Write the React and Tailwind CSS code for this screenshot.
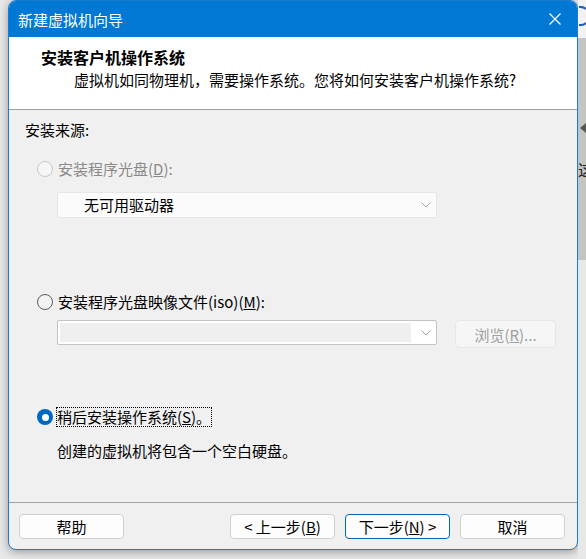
import React, { useState } from 'react';

// 单选按钮
function Radio({ checked, disabled }) {
  if (checked) {
    return (
      <span className="w-[16px] h-[16px] rounded-full bg-[#0067c0] flex items-center justify-center shrink-0">
        <span className="w-[7px] h-[7px] rounded-full bg-white" />
      </span>
    );
  }
  return (
    <span
      className={
        disabled
          ? 'w-[16px] h-[16px] rounded-full border border-[#c6c6c6] bg-[#f6f6f6] shrink-0'
          : 'w-[16px] h-[16px] rounded-full border border-[#5c5c5c] bg-[#f3f3f3] shrink-0'
      }
    />
  );
}

function Chevron() {
  return (
    <svg width="10" height="6" viewBox="0 0 10 6" className="shrink-0">
      <path d="M0.5 0.5 L5 5 L9.5 0.5" fill="none" stroke="#a6a6a6" strokeWidth="1" />
    </svg>
  );
}

function Button({ children, primary }) {
  return (
    <button
      className={
        'w-[105px] h-[25px] rounded-[4px] bg-[#fdfdfd] text-[15px] leading-none text-black flex items-center justify-center border ' +
        (primary ? 'border-[#0067c0]' : 'border-[#d0d0d0]')
      }
    >
      {children}
    </button>
  );
}

export default function App() {
  const [source, setSource] = useState('later');

  return (
    <div className="w-[586px] h-[559px] flex bg-[#e9e9e9] overflow-hidden font-['Noto_Sans_CJK_SC','Noto_Sans',sans-serif]">
      {/* 左侧空白 */}
      <div className="w-[8px] shrink-0" />

      {/* 向导窗口 */}
      <div className="w-[570px] h-[550px] shrink-0 flex flex-col rounded-[8px] border border-[#1a7bd0] overflow-hidden bg-[#f0f0f0] shadow-[0_2px_10px_rgba(0,0,0,0.35)]">
        {/* 标题栏 */}
        <div className="h-[36px] shrink-0 bg-[#0078d4] flex items-center justify-between pl-[9px] pr-[16px]">
          <span className="text-white text-[15px] leading-none">新建虚拟机向导</span>
          <svg width="12" height="12" viewBox="0 0 12 12">
            <path d="M0.5 0.5 L11.5 11.5 M11.5 0.5 L0.5 11.5" stroke="white" strokeWidth="1.2" />
          </svg>
        </div>

        {/* 页头 */}
        <div className="h-[73px] shrink-0 bg-white border-b border-[#a0a0a0] flex flex-col pl-[32px] pt-[10px]">
          <span className="text-[16px] font-bold leading-[20px] text-black">安装客户机操作系统</span>
          <span className="text-[15px] leading-[20px] text-black ml-[33px] mt-[3px]">
            虚拟机如同物理机，需要操作系统。您将如何安装客户机操作系统?
          </span>
        </div>

        {/* 内容区 */}
        <div className="flex-1 flex flex-col pl-[16px] pt-[10px] text-[15px] leading-[20px]">
          <span className="text-black">安装来源:</span>

          <label className="flex items-center gap-[4px] ml-[12px] mt-[19px] text-[#8a8a8a]">
            <Radio disabled />
            <span className="px-[1px]">
              安装程序光盘(<span className="underline">D</span>):
            </span>
          </label>

          <div className="ml-[32px] mt-[13px] w-[380px] h-[26px] bg-[#fbfbfb] border border-[#e6e6e6] rounded-[2px] flex items-center justify-between pl-[26px] pr-[5px]">
            <span className="text-black">无可用驱动器</span>
            <Chevron />
          </div>

          <label className="flex items-center gap-[4px] ml-[12px] mt-[74px] text-black" onClick={() => setSource('iso')}>
            <Radio checked={source === 'iso'} />
            <span className="px-[1px]">
              安装程序光盘映像文件(iso)(<span className="underline">M</span>):
            </span>
          </label>

          <div className="flex items-start ml-[32px] mt-[8px] gap-[18px]">
            <div className="w-[380px] h-[25px] bg-white border border-[#c4c4c4] rounded-[2px] flex items-center p-[2px] pr-[5px]">
              <div className="flex-1 h-full bg-[#efefef] mr-[10px]" />
              <Chevron />
            </div>
            <button className="w-[101px] h-[28px] rounded-[4px] bg-[#f6f6f6] border border-[#e6e6e6] text-[#a0a0a0] text-[15px] leading-none flex items-center justify-center">
              浏览(<span className="underline">R</span>)...
            </button>
          </div>

          <label className="flex items-center gap-[3px] ml-[12px] mt-[59px] text-black" onClick={() => setSource('later')}>
            <Radio checked={source === 'later'} />
            <span className="border border-dotted border-black leading-[18px]">
              稍后安装操作系统(<span className="underline">S</span>)。
            </span>
          </label>

          <span className="ml-[32px] mt-[14px] text-black">创建的虚拟机将包含一个空白硬盘。</span>
        </div>

        {/* 底部按钮 */}
        <div className="h-[47px] shrink-0 border-t border-[#a0a0a0] flex items-start justify-between pl-[10px] pr-[12px] pt-[11px]">
          <Button>帮助</Button>
          <div className="flex gap-[10px]">
            <Button>
              &lt; 上一步(<span className="underline">B</span>)
            </Button>
            <Button primary>
              下一步(<span className="underline">N</span>) &gt;
            </Button>
            <Button>取消</Button>
          </div>
        </div>
      </div>

      {/* 右侧背景窗口的一角 */}
      <div className="flex-1 flex flex-col">
        <div className="h-[38px] bg-[#f2f2f2] flex items-start pt-[6px]">
          <svg width="8" height="20" viewBox="0 0 8 20">
            <path d="M1 1 A9 9 0 0 1 8 3" fill="none" stroke="#1f5fbf" strokeWidth="2" />
            <path d="M1 19 A9 9 0 0 0 8 17" fill="none" stroke="#1f5fbf" strokeWidth="2" />
          </svg>
        </div>
        <div className="h-[222px] bg-[#c4c4c4] flex flex-col items-end pt-[60px] text-[#333]">
          <span className="w-[4px] h-[3px] bg-[#444]" />
          <svg width="6" height="10" viewBox="0 0 6 10" className="mt-[22px] self-start ml-[2px]">
            <path d="M6 0 L0 5 L6 10 Z" fill="#555" />
          </svg>
          <span className="text-[16px] leading-none mt-[28px] self-start text-[#222]">这</span>
        </div>
        <div className="flex-1 bg-[#e8e8e8]" />
      </div>
    </div>
  );
}
